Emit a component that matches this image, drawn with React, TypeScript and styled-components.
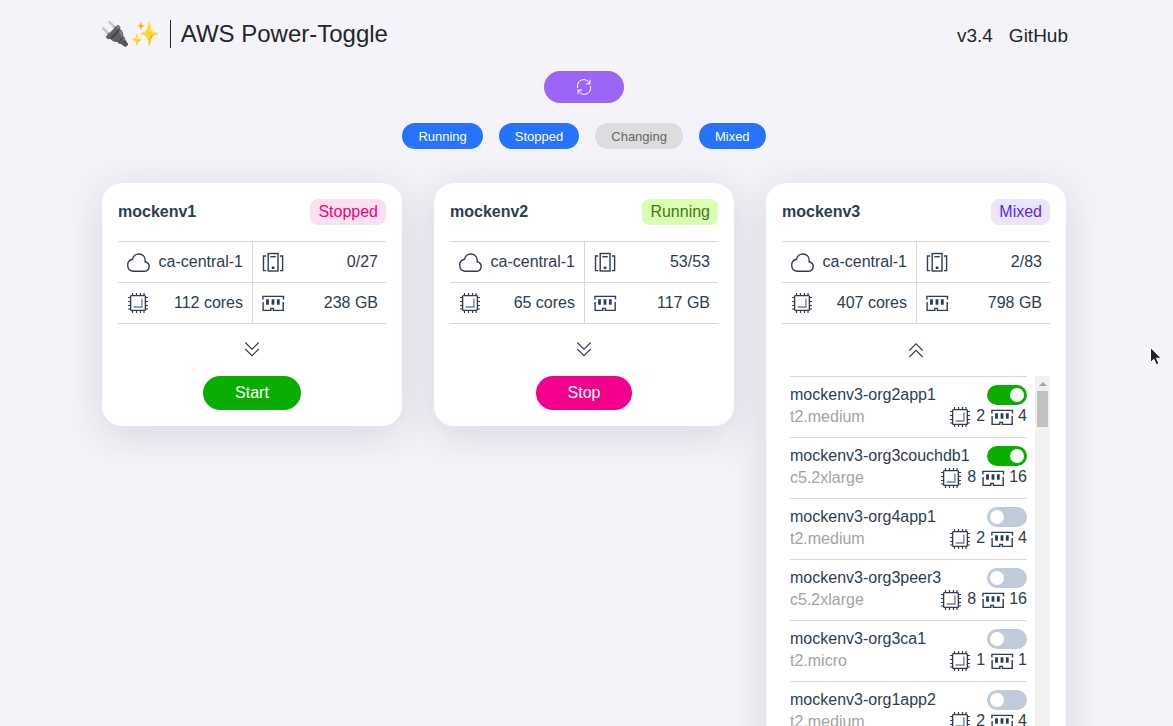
import React, { useState } from 'react';
import styled, { createGlobalStyle } from 'styled-components';

const GlobalStyle = createGlobalStyle`
  *, *::before, *::after { box-sizing: border-box; }
  html { overflow-x: hidden; }
  body {
    margin: 0;
    background: #f4f3f9;
    color: #2c3e50;
    font-family: "Liberation Sans", Arial, sans-serif;
    font-size: 16px;
    line-height: 20px;
  }
  button { font-family: inherit; border: 0; cursor: pointer; }
`;

const Page = styled.div`
  display: flex;
  flex-direction: column;
  align-items: center;
  padding: 16px 5px 48px 0;
`;

const Header = styled.header`
  width: 100%;
  max-width: 968px;
  height: 36px;
  display: flex;
  align-items: center;
  justify-content: space-between;
  color: #242629;
`;

const Brand = styled.div`
  display: flex;
  align-items: center;
`;

const Logo = styled.span`
  font-family: "Noto Color Emoji", sans-serif;
  font-size: 24px;
  line-height: 28px;
  padding-right: 10px;
`;

const Title = styled.h1`
  margin: 0;
  padding-left: 10px;
  border-left: 1px solid #242629;
  font-size: 24px;
  line-height: 28px;
  font-weight: 400;
`;

const Links = styled.nav`
  display: flex;
  gap: 16px;
  font-size: 19px;
  line-height: 24px;
  padding-top: 4px;
`;

const HeaderLink = styled.a`
  color: inherit;
  text-decoration: none;
`;

const RefreshButton = styled.button`
  display: flex;
  align-items: center;
  justify-content: center;
  width: 80px;
  height: 32px;
  margin-top: 19px;
  padding: 0;
  border-radius: 16px;
  background: #9b66f5;
  color: #fff;
`;

const Filters = styled.div`
  display: flex;
  gap: 16px;
  margin-top: 20px;
`;

const FilterButton = styled.button<{ $on: boolean }>`
  height: 26px;
  padding: 0 16px;
  border-radius: 13px;
  font-size: 13px;
  background: ${(p) => (p.$on ? '#2673ff' : '#dddddd')};
  color: ${(p) => (p.$on ? '#fff' : '#666')};
`;

const Cards = styled.main`
  display: flex;
  flex-wrap: wrap;
  justify-content: center;
  align-items: flex-start;
  gap: 32px;
  margin-top: 34px;
`;

const Card = styled.section`
  width: 300px;
  padding: 16px;
  border-radius: 20px;
  background: #fff;
  box-shadow: 0 8px 40px rgba(36, 38, 60, 0.14);
  display: flex;
  flex-direction: column;
  align-items: center;
`;

const CardHead = styled.div`
  width: 100%;
  display: flex;
  justify-content: space-between;
  align-items: center;
  margin-bottom: 16px;
`;

const CardName = styled.h2`
  margin: 0;
  font-size: 16px;
  font-weight: 700;
  line-height: 26px;
`;

type State = 'Stopped' | 'Running' | 'Mixed';

const badgeColors: Record<State, [string, string]> = {
  Stopped: ['#fbe1f0', '#f2007f'],
  Running: ['#d9ffb3', '#47780f'],
  Mixed: ['#ece5ff', '#5a26f5'],
};

const Badge = styled.span<{ $state: State }>`
  padding: 0 8px;
  line-height: 26px;
  border-radius: 8px;
  background: ${(p) => badgeColors[p.$state][0]};
  color: ${(p) => badgeColors[p.$state][1]};
`;

const Stats = styled.table`
  width: 100%;
  border-collapse: separate;
  border-spacing: 0;
  border-top: 1px solid #d9d9d9;
`;

const StatCell = styled.td`
  height: 41px;
  padding: 0 8px;
  border-bottom: 1px solid #d9d9d9;
  &:first-child {
    width: 135px;
    padding-right: 9px;
    border-right: 1px solid #d9d9d9;
  }
`;

const StatBody = styled.div`
  display: flex;
  align-items: center;
  justify-content: space-between;
  white-space: nowrap;
`;

const Expander = styled.button<{ $open: boolean }>`
  display: flex;
  align-items: center;
  justify-content: center;
  width: 48px;
  height: 52px;
  padding: 0 0 ${(p) => (p.$open ? 0 : 2)}px;
  background: none;
  color: #2c3e50;
`;

const PowerButton = styled.button<{ $stop: boolean }>`
  height: 34px;
  padding: 0 32px;
  border-radius: 17px;
  font-size: 16px;
  color: #fff;
  background: ${(p) => (p.$stop ? '#f2008c' : '#0aad00')};
`;

const ListArea = styled.div`
  width: 100%;
  display: flex;
  gap: 8px;
  padding-left: 8px;
`;

const List = styled.ul`
  flex: 1;
  margin: 0;
  padding: 0;
  list-style: none;
`;

const Row = styled.li`
  height: 61px;
  padding: 8px 0;
  border-top: 1px solid #d9d9d9;
`;

const RowLine = styled.div`
  display: flex;
  align-items: center;
  justify-content: space-between;
  height: 20px;
  white-space: nowrap;
  & + & { height: 24px; }
`;

const InstanceType = styled.span`
  color: #a3a3a3;
  line-height: 24px;
`;

const Specs = styled.span`
  display: flex;
  gap: 5px;
`;

const Spec = styled.span`
  display: flex;
  gap: 4px;
  line-height: 22px;
`;

const Switch = styled.input`
  appearance: none;
  display: block;
  width: 40px;
  height: 20px;
  margin: 0;
  padding: 3px;
  border-radius: 10px;
  background: #bfcbd9;
  cursor: pointer;
  &::before {
    content: "";
    display: block;
    width: 14px;
    height: 14px;
    border-radius: 7px;
    background: #fff;
  }
  &:checked { background: #0aad00; }
  &:checked::before { margin-left: auto; }
`;

const ScrollTrack = styled.div`
  width: 15px;
  background: #f1f1f1;
  display: flex;
  flex-direction: column;
  align-items: center;
`;

const ScrollArrow = styled.div`
  height: 15px;
  display: flex;
  align-items: center;
  &::before {
    content: "";
    border: 4px solid transparent;
    border-top: 0;
    border-bottom-color: #a3a3a3;
  }
`;

const ScrollThumb = styled.div`
  width: 11px;
  height: 36px;
  background: #c1c1c1;
`;

const Pointer = styled.svg`
  position: absolute;
  top: 346px;
  right: 10px;
`;

const Svg = ({ children, size = 24, width = 1.4 }: { children: React.ReactNode; size?: number; width?: number }) => (
  <svg width={size} height={size} viewBox={`0 0 ${size} ${size}`} fill="none" stroke="currentColor" strokeWidth={width} aria-hidden="true">
    {children}
  </svg>
);

const CloudIcon = () => (
  <Svg>
    <path d="M7 21.3h11.3a4.8 4.8 0 0 0 4.9-4.8c0-2.4-1.7-4.2-4.1-4.8.1-.6.2-1.2.1-1.8a6.4 6.4 0 0 0-12.7-.6A6.1 6.1 0 0 0 7 21.3z" />
  </Svg>
);

const ServerIcon = () => (
  <Svg>
    <rect x="7.2" y="3.5" width="9.8" height="17.5" />
    <path d="M5.2 6H2.5v14.6h2.7M18.9 6h2.7v14.6h-2.7" />
    <path d="M9.3 6.7h5.5" />
    <rect x="10.8" y="16.6" width="2.6" height="2.4" fill="currentColor" stroke="none" />
  </Svg>
);

const ChipIcon = () => (
  <Svg>
    <rect x="4.6" y="4.6" width="14.8" height="14.8" rx="0.8" />
    <path d="M6.5 2v2.4M10.5 2v2.4M14.5 2v2.4M18 2v2.4M6.5 19.6V22M10.5 19.6V22M14.5 19.6V22M18 19.6V22M2 6.5h2.4M2 10.5h2.4M2 14.5h2.4M2 18h2.4M19.6 6.5H22M19.6 10.5H22M19.6 14.5H22M19.6 18H22" strokeWidth="1.2" />
    <path d="M15.9 7.4v8.6H7.6" opacity="0.65" />
  </Svg>
);

const MemoryIcon = () => (
  <Svg>
    <path d="M1.9 8.4V5.4h20.6v3" />
    <path d="M2.1 11v8.4h7.7v-2h2.6v2h9.8V11" />
    <path d="M6.5 8.2v5.6M12 8.2v5.6M17.3 8.2v5.6" strokeWidth="2.8" />
  </Svg>
);

const Chevrons = ({ up }: { up?: boolean }) => (
  <Svg size={16} width={1.1}>
    {up ? <path d="M1.3 8.5 8 1.8l6.7 6.7M1.3 15 8 8.3l6.7 6.7" /> : <path d="M1.3 1.5 8 8.2l6.7-6.7M1.3 8 8 14.7 14.7 8" />}
  </Svg>
);

const RefreshIcon = () => (
  <Svg size={16} width={1}>
    <path d="M1.7 8.8A6.2 6.2 0 0 1 13.6 4.9M14.3 7.2A6.2 6.2 0 0 1 2.4 11.1" />
    <path d="M14 .8v4.1H9.9M2 15.2v-4.1h4.1" />
  </Svg>
);

type Instance = { name: string; type: string; cpu: number; mem: number; on: boolean };

const instances: Instance[] = [
  { name: 'mockenv3-org2app1', type: 't2.medium', cpu: 2, mem: 4, on: true },
  { name: 'mockenv3-org3couchdb1', type: 'c5.2xlarge', cpu: 8, mem: 16, on: true },
  { name: 'mockenv3-org4app1', type: 't2.medium', cpu: 2, mem: 4, on: false },
  { name: 'mockenv3-org3peer3', type: 'c5.2xlarge', cpu: 8, mem: 16, on: false },
  { name: 'mockenv3-org3ca1', type: 't2.micro', cpu: 1, mem: 1, on: false },
  { name: 'mockenv3-org1app2', type: 't2.medium', cpu: 2, mem: 4, on: false },
];

const InstanceRow = ({ item }: { item: Instance }) => {
  const [on, setOn] = useState(item.on);
  return (
    <Row>
      <RowLine>
        <label htmlFor={item.name}>{item.name}</label>
        <Switch id={item.name} type="checkbox" checked={on} onChange={() => setOn(!on)} />
      </RowLine>
      <RowLine>
        <InstanceType>{item.type}</InstanceType>
        <Specs>
          <Spec>
            <ChipIcon />
            {item.cpu}
          </Spec>
          <Spec>
            <MemoryIcon />
            {item.mem}
          </Spec>
        </Specs>
      </RowLine>
    </Row>
  );
};

const Stat = ({ icon, children }: { icon: React.ReactNode; children: React.ReactNode }) => (
  <StatCell>
    <StatBody>
      {icon}
      <span>{children}</span>
    </StatBody>
  </StatCell>
);

type Env = { name: string; state: State; count: string; cores: string; memory: string; list?: Instance[] };

const envs: Env[] = [
  { name: 'mockenv1', state: 'Stopped', count: '0/27', cores: '112 cores', memory: '238 GB' },
  { name: 'mockenv2', state: 'Running', count: '53/53', cores: '65 cores', memory: '117 GB' },
  { name: 'mockenv3', state: 'Mixed', count: '2/83', cores: '407 cores', memory: '798 GB', list: instances },
];

const EnvCard = ({ env }: { env: Env }) => (
  <Card>
    <CardHead>
      <CardName>{env.name}</CardName>
      <Badge $state={env.state}>{env.state}</Badge>
    </CardHead>
    <Stats>
      <tbody>
        <tr>
          <Stat icon={<CloudIcon />}>ca-central-1</Stat>
          <Stat icon={<ServerIcon />}>{env.count}</Stat>
        </tr>
        <tr>
          <Stat icon={<ChipIcon />}>{env.cores}</Stat>
          <Stat icon={<MemoryIcon />}>{env.memory}</Stat>
        </tr>
      </tbody>
    </Stats>
    <Expander $open={!!env.list} aria-label={env.list ? 'Collapse' : 'Expand'}>
      <Chevrons up={!!env.list} />
    </Expander>
    {env.list ? (
      <ListArea>
        <List>
          {env.list.map((item) => (
            <InstanceRow key={item.name} item={item} />
          ))}
        </List>
        <ScrollTrack>
          <ScrollArrow />
          <ScrollThumb />
        </ScrollTrack>
      </ListArea>
    ) : (
      <PowerButton $stop={env.state === 'Running'}>{env.state === 'Running' ? 'Stop' : 'Start'}</PowerButton>
    )}
  </Card>
);

export default function App() {
  const [filters, setFilters] = useState<Record<string, boolean>>({
    Running: true,
    Stopped: true,
    Changing: false,
    Mixed: true,
  });
  return (
    <>
      <GlobalStyle />
      <Page>
        <Header>
          <Brand>
            <Logo>🔌✨</Logo>
            <Title>AWS Power-Toggle</Title>
          </Brand>
          <Links>
            <HeaderLink href="#version">v3.4</HeaderLink>
            <HeaderLink href="#github">GitHub</HeaderLink>
          </Links>
        </Header>
        <RefreshButton aria-label="Refresh">
          <RefreshIcon />
        </RefreshButton>
        <Filters>
          {Object.keys(filters).map((name) => (
            <FilterButton
              key={name}
              $on={filters[name]}
              aria-pressed={filters[name]}
              onClick={() => setFilters({ ...filters, [name]: !filters[name] })}
            >
              {name}
            </FilterButton>
          ))}
        </Filters>
        <Cards>
          {envs.map((env) => (
            <EnvCard key={env.name} env={env} />
          ))}
        </Cards>
      </Page>
      <Pointer width="14" height="22" viewBox="0 0 14 22" aria-hidden="true">
        <path d="M1.5 1.5v15l3.4-3.2 2.4 5.4 2.6-1.2-2.4-5.2h4.6z" fill="#222" stroke="#fff" strokeWidth="1" />
      </Pointer>
    </>
  );
}
